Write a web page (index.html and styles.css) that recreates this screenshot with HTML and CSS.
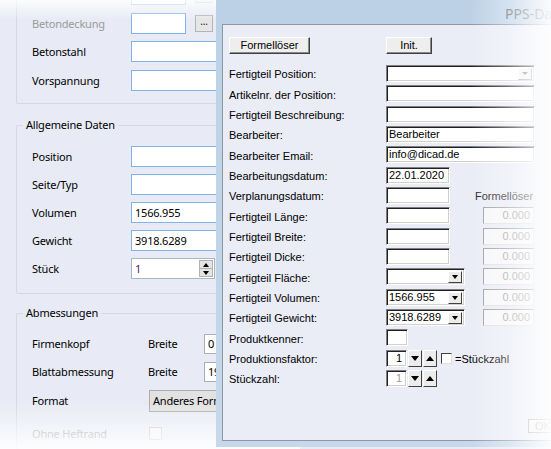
FILE: index.html
```html
<!DOCTYPE html>
<html lang="de">
<head>
<meta charset="utf-8">
<title>PPS-Daten</title>
<link rel="stylesheet" href="styles.css">
</head>
<body>
<div class="desk">
  <div class="panel">
    <div class="group g1">
      <div class="row"><span class="lbl"></span><span class="inp w55"></span><span class="dots"></span></div>
      <div class="row"><span class="lbl dis">Betondeckung</span><span class="inp w55"></span><span class="dots">...</span></div>
      <div class="row"><span class="lbl">Betonstahl</span><span class="inp"></span></div>
      <div class="row"><span class="lbl">Vorspannung</span><span class="inp"></span></div>
    </div>
    <div class="group g2">
      <span class="legend">Allgemeine Daten</span>
      <div class="row r28"><span class="lbl">Position</span><span class="inp"></span></div>
      <div class="row r28"><span class="lbl">Seite/Typ</span><span class="inp"></span></div>
      <div class="row r28"><span class="lbl">Volumen</span><span class="inp">1566.955</span></div>
      <div class="row r28"><span class="lbl">Gewicht</span><span class="inp">3918.6289</span></div>
      <div class="row r28"><span class="lbl">Stück</span>
        <span class="spin"><span class="spinval">1</span><span class="spinbtns"><span class="sb"><i class="tri up"></i></span><span class="sb"><i class="tri down"></i></span></span></span>
      </div>
    </div>
    <div class="group g3">
      <span class="legend">Abmessungen</span>
      <div class="row r28"><span class="lbl wide">Firmenkopf</span><span class="sub">Breite</span><span class="inp gray">0</span></div>
      <div class="row r28"><span class="lbl wide">Blattabmessung</span><span class="sub">Breite</span><span class="inp gray">1900</span></div>
      <div class="row r28 fmt"><span class="lbl wide">Format</span><span class="combo">Anderes Format</span></div>
      <div class="row r28 heft"><span class="lbl wide dis">Ohne Heftrand</span><span class="chk"></span></div>
    </div>
    <div class="fade-top"></div>
    <div class="fade-bottom"></div>
  </div>

  <div class="dialog">
    <div class="title">PPS-Daten</div>
    <div class="client">
      <div class="btnrow">
        <span class="b3d formel">Formellöser</span>
        <span class="b3d init">Init.</span>
      </div>
      <div class="form">
        <span class="fl">Fertigteil Position:</span>
        <span class="sunk wide cmb"><span class="dd dim"><i class="tri down sm"></i></span></span>

        <span class="fl">Artikelnr. der Position:</span>
        <span class="sunk wide"></span>

        <span class="fl">Fertigteil Beschreibung:</span>
        <span class="sunk wide"></span>

        <span class="fl">Bearbeiter:</span>
        <span class="sunk wide">Bearbeiter</span>

        <span class="fl">Bearbeiter Email:</span>
        <span class="sunk wide">info@dicad.de</span>

        <span class="fl">Bearbeitungsdatum:</span>
        <span class="sunk date">22.01.2020</span>

        <span class="fl">Verplanungsdatum:</span>
        <span class="sunk date"></span>
        <span class="rhead">Formellöser</span>

        <span class="fl">Fertigteil Länge:</span>
        <span class="sunk date"></span>
        <span class="rf">0.000</span>

        <span class="fl">Fertigteil Breite:</span>
        <span class="sunk date"></span>
        <span class="rf">0.000</span>

        <span class="fl">Fertigteil Dicke:</span>
        <span class="sunk date"></span>
        <span class="rf">0.000</span>

        <span class="fl">Fertigteil Fläche:</span>
        <span class="sunk combo79 cmb"><span class="dd"><i class="tri down"></i></span></span>
        <span class="rf">0.000</span>

        <span class="fl">Fertigteil Volumen:</span>
        <span class="sunk combo79 cmb">1566.955<span class="dd"><i class="tri down"></i></span></span>
        <span class="rf">0.000</span>

        <span class="fl">Fertigteil Gewicht:</span>
        <span class="sunk combo79 cmb">3918.6289<span class="dd"><i class="tri down"></i></span></span>
        <span class="rf">0.000</span>

        <span class="fl">Produktkenner:</span>
        <span class="sunk small"></span>

        <span class="fl">Produktionsfaktor:</span>
        <span class="spinrow">
          <span class="sunk sval">1</span>
          <span class="rb"><i class="tri down big"></i></span>
          <span class="rb"><i class="tri up big"></i></span>
          <span class="dchk"></span>
          <span class="chktxt">=Stückzahl</span>
        </span>

        <span class="fl">Stückzahl:</span>
        <span class="spinrow">
          <span class="sunk sval grayval">1</span>
          <span class="rb"><i class="tri down big"></i></span>
          <span class="rb"><i class="tri up big"></i></span>
        </span>
      </div>
      <span class="ok">OK</span>
    </div>
  </div>
  <div class="fade-right"></div>
</div>
</body>
</html>
```

FILE: styles.css
```css
* { box-sizing: border-box; }
html, body { margin: 0; padding: 0; }
body { background: #ffffff; }

.desk {
  position: relative;
  width: 551px;
  height: 449px;
  overflow: hidden;
  background: #e8ebf5;
}

/* ---------- left panel ---------- */
.panel {
  position: relative;
  width: 300px;
  height: 449px;
  padding-left: 16px;
  display: flex;
  flex-direction: column;
  font-family: "Noto Sans", "Open Sans", sans-serif;
  font-size: 11px;
  letter-spacing: -0.2px;
  color: #000;
}

.group {
  position: relative;
  width: 280px;
  border: 1px solid #d6d9e0;
  border-radius: 2px;
}
.g1 { margin-top: -30.5px; padding: 10px 0 8.5px 15px; }
.g2 { margin-top: 21px; padding: 16.5px 0 10.5px 15px; }
.g3 { margin-top: 19px; padding: 15.5px 0 10px 15px; }

.legend {
  position: absolute;
  top: -9px;
  left: 6px;
  padding: 0 3px;
  background: #e8ebf5;
  line-height: 16px;
}

.row {
  display: flex;
  align-items: center;
  height: 28.5px;
}
.row.r28 { height: 28px; }
.row.fmt { margin-top: 1px; }
.row.heft { margin-top: 5px; }

.lbl { width: 99px; flex: none; }
.lbl.wide { width: 116px; }
.lbl.dis { color: #9a9a9a; }
.sub { width: 56px; flex: none; }

.inp {
  flex: none;
  width: 110px;
  height: 21px;
  border: 1px solid #7eb4ea;
  background: #fff;
  padding-left: 3px;
  line-height: 19px;
}
.inp.w55 { width: 55px; }
.inp.gray { border-color: #abadb3; height: 20px; line-height: 18px; }

.dots {
  flex: none;
  width: 18px;
  height: 17px;
  margin-left: 9px;
  border: 1px solid #b4b4b4;
  background: #e6e6e6;
  font-size: 10px;
  line-height: 11px;
  text-align: center;
  color: #222;
}

.spin {
  flex: none;
  display: flex;
  width: 84px;
  height: 21px;
  border: 1px solid #a9b6c7;
  background: #fff;
}
.spinval { flex: 1; padding-left: 3px; line-height: 19px; color: #4b1c6e; }
.spinbtns {
  display: flex;
  flex-direction: column;
  width: 14px;
  margin: 1px 1px 1px 0;
}
.sb {
  flex: 1;
  display: flex;
  align-items: center;
  justify-content: center;
  background: #e4e4e4;
  border: 1px solid #b2b2b2;
}
.sb + .sb { border-top: none; }

.combo {
  flex: none;
  width: 110px;
  height: 22px;
  margin-left: 1px;
  border: 1px solid #acacac;
  background: #e2e2e2;
  padding-left: 3px;
  line-height: 20px;
  white-space: nowrap;
  overflow: hidden;
}
.chk {
  flex: none;
  width: 13px;
  height: 13px;
  margin-left: 1px;
  border: 1px solid #c6c6c6;
  background: #f4f4f4;
}

.fade-top {
  position: absolute;
  left: 0; top: 0;
  width: 100%; height: 20px;
  background: linear-gradient(to bottom, rgba(255,255,255,0.85), rgba(255,255,255,0));
  pointer-events: none;
}
.fade-bottom {
  position: absolute;
  left: 0; bottom: 0;
  width: 100%; height: 46px;
  background: linear-gradient(to top, rgba(255,255,255,0.9), rgba(255,255,255,0));
  pointer-events: none;
}

/* triangles */
.tri { display: block; width: 0; height: 0; border-left: 3.5px solid transparent; border-right: 3.5px solid transparent; }
.tri.up { border-bottom: 4px solid #000; }
.tri.down { border-top: 4px solid #000; }
.tri.big { border-left-width: 4.5px; border-right-width: 4.5px; }
.tri.big.up { border-bottom-width: 5px; }
.tri.big.down { border-top-width: 5px; }
.tri.sm { border-left-width: 3px; border-right-width: 3px; border-top-width: 3px; border-top-color: #777; }

/* ---------- dialog ---------- */
.dialog {
  position: absolute;
  left: 216px;
  top: 0;
  width: 360px;
  height: 447px;
  padding: 24px 0 6px 6px;
  background: linear-gradient(to bottom, #bcd1e6, #c2d5e8 60%, #c7d8ea);
  font-family: "Liberation Sans", Arial, sans-serif;
  font-size: 11px;
  color: #000;
}
.title {
  position: absolute;
  left: 289px;
  top: 4px;
  font-family: "Noto Sans", "Open Sans", sans-serif;
  font-size: 14px;
  color: #5b6672;
  white-space: nowrap;
}
.client {
  height: 100%;
  border: 1px solid #8c98a8;
  background: #eaecf6;
  padding: 12px 0 0 6px;
  display: flex;
  flex-direction: column;
}
.btnrow { display: flex; height: 17px; flex: none; }
.b3d {
  display: block;
  height: 17px;
  background: #eeeeee;
  border: 1px solid;
  border-color: #ffffff #404040 #404040 #ffffff;
  box-shadow: inset -1px -1px #8a8a8a;
  text-align: center;
  line-height: 14px;
}
.formel { width: 81px; }
.init { width: 46px; margin-left: 76px; }

.form {
  margin-top: 9.3px;
  display: grid;
  grid-template-columns: 157px 97px 70px;
  grid-auto-rows: 20.33px;
  align-items: center;
  flex: none;
}
.fl { grid-column: 1; line-height: 13px; padding-top: 3px; white-space: nowrap; }

.sunk {
  position: relative;
  display: block;
  height: 17px;
  background: #fff;
  border: 1px solid;
  border-color: #808080 #ffffff #ffffff #808080;
  box-shadow: inset 1px 1px #202020, inset -1px -1px #d4d0c8;
  padding-left: 2px;
  line-height: 15px;
  white-space: nowrap;
}
.sunk.wide { grid-column: 2 / 4; width: 149px; }
.sunk.date { width: 64px; }
.sunk.combo79 { width: 79px; }
.sunk.small { width: 22px; }

.dd {
  position: absolute;
  right: 2px;
  top: 2px;
  width: 14px;
  height: 12px;
  background: #ececec;
  border: 1px solid;
  border-color: #ffffff #404040 #404040 #ffffff;
  display: flex;
  align-items: center;
  justify-content: center;
}
.dd.dim { border-color: #ffffff #a0a0a0 #a0a0a0 #ffffff; background: #f2f2f2; }

.rhead { margin-left: -8px; color: #222; line-height: 13px; padding-top: 2px; }
.rf {
  display: block;
  width: 51px;
  height: 17px;
  background: #f7f7f9;
  border: 1px solid;
  border-color: #a0a0a0 #e0e0e0 #e0e0e0 #a0a0a0;
  color: #a0a0a0;
  text-align: right;
  padding-right: 3px;
  line-height: 15px;
}

.spinrow { grid-column: 2 / 4; display: flex; align-items: center; height: 17px; }
.sval { width: 21px; text-align: right; padding-right: 4px; }
.grayval { color: #9a9a9a; }
.rb {
  width: 14px;
  height: 17px;
  margin-left: 1px;
  background: #ececec;
  border: 1px solid;
  border-color: #ffffff #404040 #404040 #ffffff;
  display: flex;
  align-items: center;
  justify-content: center;
}
.rb + .rb { margin-left: 1px; }
.dchk {
  width: 11px;
  height: 11px;
  margin-left: 4px;
  background: #fff;
  border: 1px solid;
  border-color: #404040 #e0e0e0 #e0e0e0 #404040;
}
.chktxt { margin-left: 3px; line-height: 13px; padding-top: 2px; }

.ok {
  display: block;
  width: 30px;
  height: 14px;
  margin-top: auto;
  margin-bottom: 7px;
  margin-left: 299px;
  border: 1px solid #a0a0a0;
  color: #a0a0a0;
  background: #f0f0f0;
  text-align: center;
  line-height: 12px;
}

.fade-right {
  position: absolute;
  left: 470px;
  top: 0;
  width: 81px;
  height: 449px;
  background: linear-gradient(to right, rgba(255,255,255,0) 0%, rgba(255,255,255,0.35) 45%, rgba(255,255,255,0.93) 100%);
  pointer-events: none;
}
```
